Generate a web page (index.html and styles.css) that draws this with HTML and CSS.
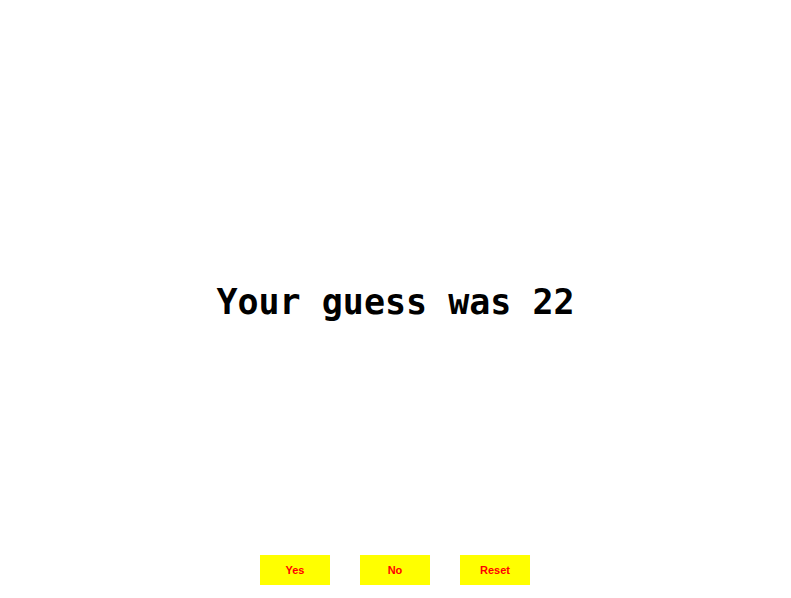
FILE: index.html
```html
<!DOCTYPE html>
<html>
<head>
<meta charset="utf-8">
<link rel="stylesheet" href="styles.css">
</head>
<body>
<div class="page">
  <div class="spacer"></div>
  <h1 class="title">Your guess was 22</h1>
  <div class="actions">
    <button class="btn">Yes</button>
    <button class="btn">No</button>
    <button class="btn">Reset</button>
  </div>
</div>
</body>
</html>
```
FILE: styles.css
```css
html, body {
  margin: 0;
  padding: 0;
  background: #ffffff;
}
.page {
  height: 598px;
  display: grid;
  grid-template-rows: 1fr auto 1fr;
}
.title {
  margin: 0;
  padding-top: 6px;
  text-align: center;
  font-family: "DejaVu Sans Mono", monospace;
  font-weight: bold;
  font-size: 35px;
  line-height: 40px;
  color: #000000;
}
.actions {
  align-self: end;
  display: flex;
  justify-content: center;
  gap: 30px;
  padding-right: 1px;
  padding-bottom: 13px;
}
.btn {
  width: 70px;
  height: 30px;
  border: none;
  padding: 0;
  margin: 0;
  background: #ffff00;
  color: #ff0000;
  font-family: "Liberation Sans", Arial, sans-serif;
  font-weight: bold;
  font-size: 11px;
}
```
